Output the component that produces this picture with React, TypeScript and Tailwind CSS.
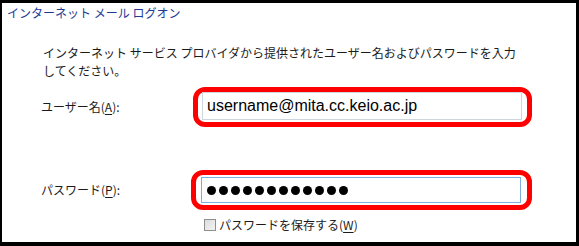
const jp = '[font-family:"Noto_Sans_CJK_JP","Noto_Sans",sans-serif]'

function Accel({ k }: { k: string }) {
  return (
    <>
      (<span className="underline underline-offset-2">{k}</span>)
    </>
  )
}

function Dots({ count }: { count: number }) {
  return (
    <div className="flex items-center gap-[3px]">
      {Array.from({ length: count }).map((_, i) => (
        <span key={i} className="block h-[9px] w-[9px] rounded-full bg-black" />
      ))}
    </div>
  )
}

export default function App() {
  return (
    <div className="h-[246px] w-[579px] bg-black pb-[4px] pl-[2px] pr-[3px] pt-[3px]">
      <div className={`flex h-full flex-col bg-white text-[12px] text-[#1b1b1b] ${jp}`}>
        <h1 className="mt-[2px] h-[16px] pl-[5px] leading-[16px] text-[#1e3a96]">
          インターネット メール ログオン
        </h1>

        <p className="mt-[23px] pl-[41px] leading-[18px]">
          <span className="block whitespace-nowrap">
            インターネット サービス プロバイダから提供されたユーザー名およびパスワードを入力
          </span>
          <span className="block whitespace-nowrap">してください。</span>
        </p>

        <div className="mt-[7px] flex items-center">
          <label className="w-[191px] shrink-0 pl-[39px]">
            ユーザー名<Accel k="A" />:
          </label>
          <div className="h-[40px] w-[339px] rounded-[12px] border-[5px] border-[#ff0000] pb-[2px] pl-[4px] pr-[5px]">
            <div className="flex h-[28px] items-center border border-[#cdd5de] bg-white pl-[4px] font-['Liberation_Sans',sans-serif] text-[16px] text-black">
              username@mita.cc.keio.ac.jp
            </div>
          </div>
        </div>

        <div className="mt-[43px] flex items-center">
          <label className="w-[189px] shrink-0 pl-[39px]">
            パスワード<Accel k="P" />:
          </label>
          <div className="h-[40px] w-[341px] rounded-[12px] border-[5px] border-[#ff0000] py-[2px] pl-[5px] pr-[6px]">
            <div className="flex h-[26px] items-center border border-[#7eaee0] bg-white pl-[5px]">
              <Dots count={12} />
            </div>
          </div>
        </div>

        <div className="mt-[8px] flex items-center pl-[202px]">
          <span className="block h-[12px] w-[12px] border border-[#8e8f8f] bg-gradient-to-br from-[#dcdcdc] to-[#f4f4f4]" />
          <span className="ml-[3px] leading-[14px]">
            パスワードを保存する<Accel k="W" />
          </span>
        </div>
      </div>
    </div>
  )
}
